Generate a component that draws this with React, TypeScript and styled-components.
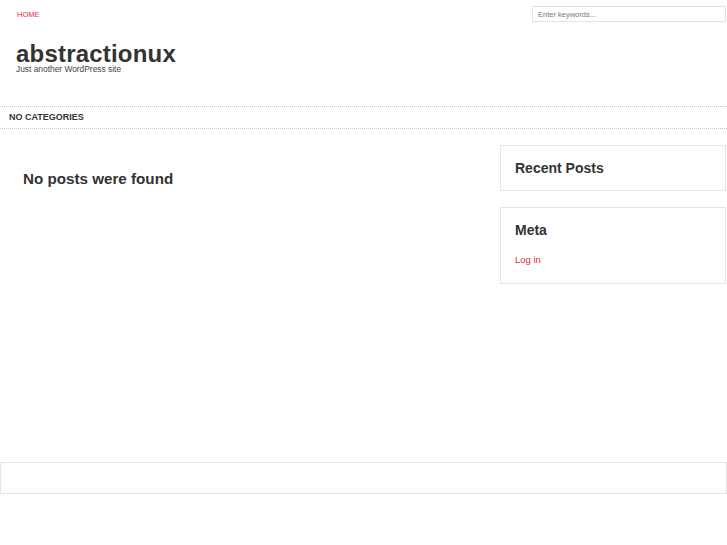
import styled, { createGlobalStyle } from 'styled-components';

const GlobalStyle = createGlobalStyle`
  html, body {
    margin: 0;
    padding: 0;
    background: #fff;
  }
  body {
    font-family: "Liberation Sans", Arial, Helvetica, sans-serif;
    color: #333;
  }
  * {
    box-sizing: border-box;
  }
`;

const Page = styled.div`
  width: 727px;
`;

const TopBar = styled.div`
  display: flex;
  justify-content: space-between;
  align-items: flex-start;
  height: 28px;
  padding: 0 1px 0 17px;
`;

const NavLink = styled.a`
  display: block;
  margin-top: 10px;
  font-size: 7.5px;
  line-height: 9px;
  color: #e0303b;
  text-decoration: none;
  text-transform: uppercase;
`;

const SearchInput = styled.input`
  margin-top: 6px;
  width: 194px;
  height: 16px;
  padding: 0 5px;
  border: 1px solid #e2e2e2;
  font-family: inherit;
  font-size: 7.5px;
  color: #666;
  outline: none;
  &::placeholder {
    color: #777;
  }
`;

const Header = styled.header`
  padding: 16px 16px 32px;
`;

const SiteTitle = styled.h1`
  margin: 0;
  font-size: 24px;
  line-height: 20px;
  font-weight: bold;
  letter-spacing: 0.2px;
  color: #333;
`;

const Tagline = styled.p`
  margin: 1px 0 0;
  font-size: 8.4px;
  line-height: 9px;
  color: #444;
`;

const CategoryBar = styled.nav`
  border-top: 1px dotted #c8c8c8;
  border-bottom: 1px dotted #c8c8c8;
  height: 23px;
  padding-left: 9px;
  font-size: 9px;
  line-height: 21px;
  font-weight: bold;
  color: #333;
`;

const Content = styled.div`
  display: flex;
  justify-content: space-between;
  align-items: flex-start;
  min-height: 333px;
`;

const Main = styled.main`
  padding: 41px 0 0 23px;
`;

const NoPosts = styled.h2`
  margin: 0;
  font-size: 15.2px;
  line-height: 18px;
  font-weight: bold;
  color: #333;
`;

const Sidebar = styled.aside`
  width: 226px;
  margin: 16px 1px 0 0;
  display: flex;
  flex-direction: column;
  gap: 16px;
`;

const Widget = styled.section`
  border: 1px solid #e4e4e4;
  padding: 14px 14px 0;
`;

const WidgetTitle = styled.h3`
  margin: 0 0 14px;
  font-size: 14px;
  line-height: 16px;
  font-weight: bold;
  color: #333;
`;

const WidgetList = styled.ul`
  list-style: none;
  margin: 0;
  padding: 1px 0 16px;
`;

const WidgetLink = styled.a`
  display: block;
  font-size: 9.5px;
  line-height: 14px;
  color: #e0303b;
  text-decoration: none;
`;

const Footer = styled.footer`
  height: 32px;
  border: 1px solid #e4e4e4;
`;

export default function App() {
  return (
    <Page>
      <GlobalStyle />
      <TopBar>
        <NavLink href="#">Home</NavLink>
        <SearchInput type="text" placeholder="Enter keywords..." />
      </TopBar>
      <Header>
        <SiteTitle>abstractionux</SiteTitle>
        <Tagline>Just another WordPress site</Tagline>
      </Header>
      <CategoryBar>NO CATEGORIES</CategoryBar>
      <Content>
        <Main>
          <NoPosts>No posts were found</NoPosts>
        </Main>
        <Sidebar>
          <Widget>
            <WidgetTitle>Recent Posts</WidgetTitle>
          </Widget>
          <Widget>
            <WidgetTitle>Meta</WidgetTitle>
            <WidgetList>
              <li>
                <WidgetLink href="#">Log in</WidgetLink>
              </li>
            </WidgetList>
          </Widget>
        </Sidebar>
      </Content>
      <Footer />
    </Page>
  );
}
